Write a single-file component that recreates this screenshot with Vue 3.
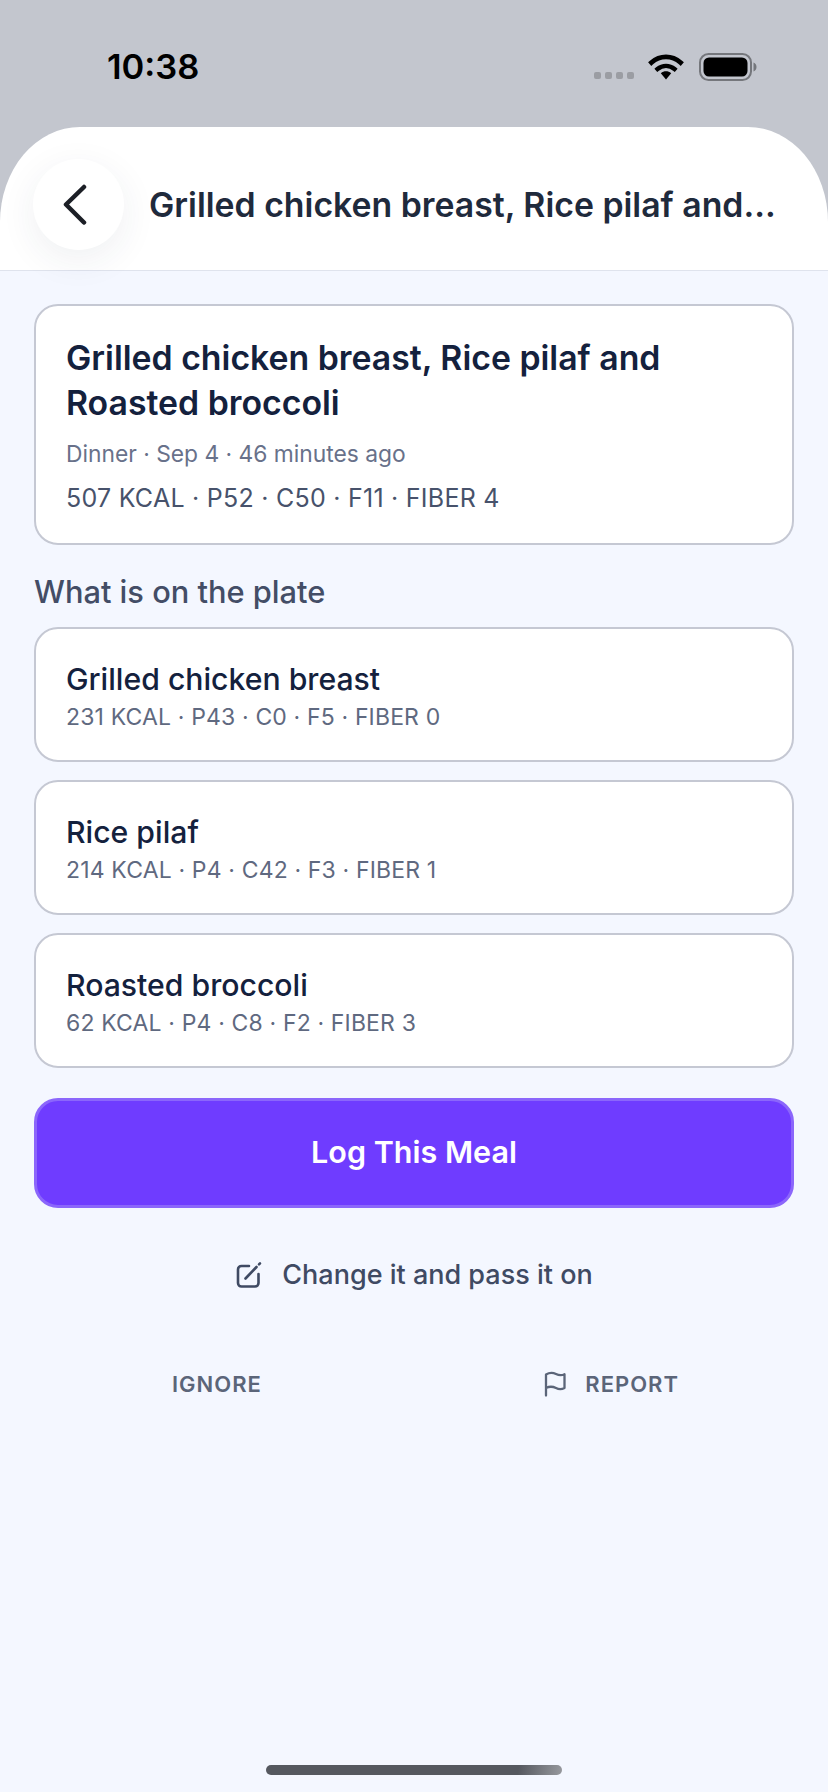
<template>
  <div class="screen">
    <div class="status">
      <span class="time">10:38</span>
      <div class="status-icons">
        <div class="dots"><i></i><i></i><i></i><i></i></div>
        <svg class="wifi" width="36" height="27" viewBox="0 0 36 27">
          <path d="M3.500 9.500C12 2 24 2 32.500 9.500" fill="none" stroke="#000" stroke-width="4.800" stroke-linecap="square" />
          <path d="M9.500 16C14.500 11.800 21.500 11.800 26.500 16" fill="none" stroke="#000" stroke-width="4.400" stroke-linecap="square" />
          <path d="M12.800 20.200C16 17.600 20 17.600 23.200 20.200L18 26.500Z" fill="#000" />
        </svg>
        <svg class="battery" width="58" height="28" viewBox="0 0 58 28">
          <rect x="1" y="1" width="51" height="26" rx="8.500" fill="none" stroke="#75777c" stroke-width="2" />
          <rect x="4.500" y="4.500" width="44" height="19" rx="5.500" fill="#000" />
          <path d="M54.500 9.500C56.500 10 57.500 12 57.500 14C57.500 16 56.500 18 54.500 18.500Z" fill="#75777c" />
        </svg>
      </div>
    </div>

    <header class="topbar">
      <button class="back">
        <svg width="30" height="42" viewBox="0 0 30 42">
          <path d="M24 3L6 20.500L24 38.500" fill="none" stroke="#1c1f26" stroke-width="4.500" stroke-linecap="round" stroke-linejoin="round" />
        </svg>
      </button>
      <div class="topbar-title">{{ shortTitle }}</div>
    </header>

    <main class="content">
      <section class="card summary">
        <h1>{{ mealTitle }}</h1>
        <p class="meta">Dinner · Sep 4 · 46 minutes ago</p>
        <p class="macros">507 KCAL · P52 · C50 · F11 · FIBER 4</p>
      </section>

      <h2>What is on the plate</h2>

      <div class="items">
        <div v-for="item in items" :key="item.name" class="card item">
          <div class="item-name">{{ item.name }}</div>
          <div class="item-macros">{{ item.macros }}</div>
        </div>
      </div>

      <button class="log">Log This Meal</button>

      <button class="change">
        <svg width="28" height="28" viewBox="0 0 28 28" fill="none" stroke="#3f4a63" stroke-width="2.600" stroke-linecap="round" stroke-linejoin="round">
          <path d="M14 5H6.500C4.500 5 3 6.500 3 8.500V22C3 24 4.500 25.500 6.500 25.500H20C22 25.500 23.500 24 23.500 22V13" />
          <path d="M10.500 17.500L21.500 6" />
          <path d="M24 3.400L25 2.400" />
        </svg>
        <span>Change it and pass it on</span>
      </button>

      <div class="footer-actions">
        <button class="minor">IGNORE</button>
        <button class="minor">
          <svg width="24" height="26" viewBox="0 0 24 26" fill="none" stroke="#5b6579" stroke-width="2.300" stroke-linecap="round" stroke-linejoin="round">
            <path d="M3 24.500V3.500C8 .5 11 2 13 3C16 4.500 19 4.500 21.500 3.200V17C18.500 18.500 16 18.500 13 17C10.500 15.800 7 15 3 17" />
          </svg>
          <span>REPORT</span>
        </button>
      </div>
    </main>

    <div class="home-bar"></div>
  </div>
</template>

<script setup>
const mealTitle = 'Grilled chicken breast, Rice pilaf and Roasted broccoli'
const shortTitle = 'Grilled chicken breast, Rice pilaf and...'

const items = [
  { name: 'Grilled chicken breast', macros: '231 KCAL · P43 · C0 · F5 · FIBER 0' },
  { name: 'Rice pilaf', macros: '214 KCAL · P4 · C42 · F3 · FIBER 1' },
  { name: 'Roasted broccoli', macros: '62 KCAL · P4 · C8 · F2 · FIBER 3' }
]
</script>

<style>
html,
body {
  margin: 0;
  background: #f4f7ff;
}
</style>

<style scoped>
.screen {
  width: 828px;
  height: 1792px;
  position: relative;
  overflow: hidden;
  background: #c3c6ce;
  display: flex;
  flex-direction: column;
  font-family: Inter, "Noto Sans", sans-serif;
}

.status {
  height: 127px;
  box-sizing: border-box;
  flex: none;
  display: flex;
  justify-content: space-between;
  align-items: flex-start;
  padding: 47px 71px 0 107px;
}

.time {
  font-size: 34.500px;
  line-height: 40px;
  font-weight: 600;
  color: #000;
}

.status-icons {
  display: flex;
  align-items: flex-start;
  padding-top: 6px;
}

.dots {
  display: flex;
  gap: 4px;
  margin: 19px 14px 0 0;
}

.dots i {
  width: 7px;
  height: 7px;
  border-radius: 2px;
  background: #9b9da3;
}

.wifi {
  margin-right: 15px;
}

.topbar {
  flex: none;
  height: 144px;
  box-sizing: border-box;
  background: #fff;
  border-radius: 80px 80px 0 0 / 95px 95px 0 0;
  border-bottom: 1px solid #dfe3ed;
  display: flex;
  align-items: center;
  padding: 12px 40px 0 33px;
  position: relative;
  z-index: 1;
}

.back {
  flex: none;
  width: 91px;
  height: 91px;
  padding: 0;
  border: none;
  border-radius: 50%;
  background: #fff;
  box-shadow: 0 10px 36px rgba(40, 50, 80, 0.075);
  display: flex;
  align-items: center;
  justify-content: center;
  margin-right: 25px;
}

.back svg {
  margin-left: -8px;
}

.topbar-title {
  min-width: 0;
  flex: 1;
  font-size: 33.800px;
  font-weight: 600;
  color: #1f2a3c;
  white-space: nowrap;
}

.content {
  flex: 1;
  background: #f4f7ff;
  padding: 33px 34px 0;
  display: flex;
  flex-direction: column;
}

.card {
  box-sizing: border-box;
  background: #fff;
  border: 2px solid #c5c8d3;
  border-radius: 24px;
}

.summary {
  height: 241px;
  padding: 29px 30px 0;
}

.summary h1 {
  margin: 0;
  font-size: 33.800px;
  line-height: 45px;
  font-weight: 600;
  color: #14213d;
}

.meta {
  margin: 14px 0 0;
  font-size: 22.800px;
  line-height: 30px;
  color: #68718a;
}

.macros {
  margin: 14px 0 0;
  font-size: 25px;
  letter-spacing: 0.250px;
  line-height: 30px;
  color: #47526b;
}

h2 {
  margin: 27px 0 0;
  font-size: 30.800px;
  line-height: 40px;
  font-weight: 500;
  color: #434d66;
}

.items {
  margin-top: 15px;
  display: flex;
  flex-direction: column;
  gap: 18px;
}

.item {
  height: 135px;
  padding: 30px 30px 0;
}

.item-name {
  font-size: 30.200px;
  line-height: 40px;
  font-weight: 500;
  color: #14213d;
}

.item-macros {
  font-size: 23px;
  letter-spacing: 0.150px;
  line-height: 30px;
  color: #5f6980;
  margin-top: 3px;
}

button {
  font-family: inherit;
  cursor: pointer;
}

.log {
  margin-top: 30px;
  height: 110px;
  flex: none;
  box-sizing: border-box;
  border: 3px solid #8b66fb;
  border-radius: 24px;
  background: #6f3cff;
  color: #fff;
  padding: 0 0 3px;
  font-size: 30.500px;
  font-weight: 600;
}

.change {
  align-self: center;
  margin-top: 47px;
  padding: 0;
  border: none;
  background: none;
  display: flex;
  align-items: center;
  gap: 19px;
  font-size: 27px;
  line-height: 40px;
  font-weight: 500;
  color: #3f4a63;
}

.footer-actions {
  margin-top: 69px;
  display: flex;
  justify-content: space-between;
  padding: 0 115px 0 138px;
}

.minor {
  padding: 0;
  border: none;
  background: none;
  display: flex;
  align-items: center;
  gap: 18px;
  height: 40px;
  font-size: 22px;
  font-weight: 600;
  letter-spacing: 1px;
  color: #5b6579;
}

.home-bar {
  position: absolute;
  left: 266px;
  top: 1765px;
  width: 296px;
  height: 10px;
  border-radius: 5px;
  background: linear-gradient(100deg, #55585f 0%, #55585f 85%, #97999e 100%);
  z-index: 2;
}
</style>
